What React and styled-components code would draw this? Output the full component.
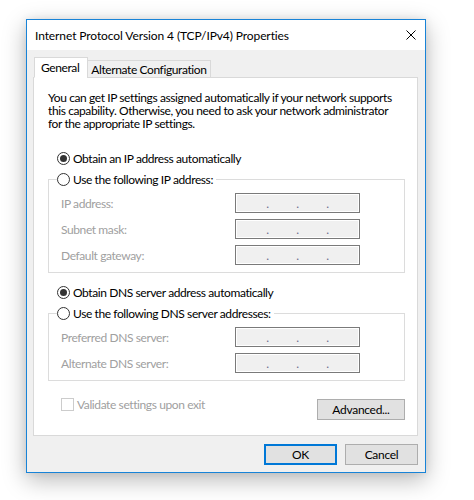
import React, { useState } from 'react'
import styled, { createGlobalStyle } from 'styled-components'

const GlobalStyle = createGlobalStyle`
    html, body {
        margin: 0;
        background: #fff;
    }
    body {
        font-family: Lato, "Liberation Sans", sans-serif;
        font-size: 12px;
        letter-spacing: -0.4px;
        color: #000;
    }
`

const Page = styled.div`
    padding: 19px 0 0 26px;
    height: 500px;
    box-sizing: border-box;
`

const Window = styled.div`
    width: 400px;
    height: 454px;
    box-sizing: border-box;
    border: 1px solid #1883d7;
    background: #f0f0f0;
    display: flex;
    flex-direction: column;
    box-shadow: 0 7px 22px rgba(0, 0, 0, 0.28), 0 0 8px rgba(0, 0, 0, 0.08);
`

const TitleBar = styled.div`
    height: 30px;
    background: #fff;
    display: flex;
    align-items: center;
    justify-content: space-between;
    padding: 0 9px 0 8px;
    font-size: 12px;
    letter-spacing: -0.1px;
`

const Body = styled.div`
    flex: 1;
    display: flex;
    flex-direction: column;
    padding: 7px 7px 7px 6px;
`

const TabStrip = styled.div`
    display: flex;
    align-items: flex-end;
    height: 21px;
    padding-left: 1px;
    margin-bottom: -1px;
    position: relative;
    z-index: 1;
`

const Tab = styled.div`
    box-sizing: border-box;
    display: flex;
    align-items: center;
    border: 1px solid #d9d9d9;
    height: ${p => (p.active ? '21px' : '18px')};
    padding: ${p => (p.active ? '0 8px 0 6px' : '0 4px 0 3px')};
    background: ${p => (p.active ? '#fff' : '#f0f0f0')};
    border-bottom-color: ${p => (p.active ? '#fff' : '#d9d9d9')};
    margin-left: ${p => (p.active ? '0' : '-1px')};
    padding-top: ${p => (p.active ? '0' : '1px')};
    cursor: default;
`

const Panel = styled.div`
    flex: 1;
    background: #fff;
    border: 1px solid #d9d9d9;
    padding: 13px 12px 0 14px;
    display: flex;
    flex-direction: column;
`

const Intro = styled.p`
    margin: 0;
    line-height: 13px;
    white-space: nowrap;
`

const RadioRow = styled.label`
    display: flex;
    align-items: center;
    gap: 3px;
    height: 15px;
    padding-left: 9px;
    margin-top: ${p => p.top || 0}px;
`

const Radio = styled.span`
    box-sizing: border-box;
    width: 13px;
    height: 13px;
    border-radius: 50%;
    border: 1px solid #333;
    background: #fff;
    display: flex;
    align-items: center;
    justify-content: center;

    &::after {
        content: "";
        width: 7px;
        height: 7px;
        border-radius: 50%;
        background: #333;
        display: ${p => (p.checked ? 'block' : 'none')};
    }
`

const Group = styled.fieldset`
    margin: 6px 0 0 0;
    padding: 6px 0 7px 8px;
    border: 1px solid #dcdcdc;
    min-width: 0;
`

const Legend = styled.legend`
    display: flex;
    align-items: center;
    gap: 3px;
    height: 15px;
    padding: 0 3px 0 0;
`

const Fields = styled.div`
    display: grid;
    grid-template-columns: 174px 125px;
    grid-auto-rows: 20px;
    row-gap: 6px;
    padding-left: 4px;
`

const FieldLabel = styled.span`
    display: flex;
    align-items: center;
    color: #a0a0a0;
`

const IpBox = styled.div`
    box-sizing: border-box;
    border: 1px solid #7a7a7a;
    box-shadow: inset 0 0 0 1px #fff;
    background: #f0f0f0;
    display: flex;
    justify-content: center;
    gap: 27px;
    line-height: 20px;
    color: #6d6d8d;
`

const Dot = styled.span`
    width: 3px;
    text-align: center;
    line-height: 19px;
`

const BottomRow = styled.div`
    display: flex;
    justify-content: space-between;
    align-items: flex-start;
    margin-top: 17px;
`

const CheckRow = styled.label`
    display: flex;
    align-items: center;
    gap: 3px;
    margin-left: 13px;
    height: 13px;
    color: #a0a0a0;
`

const CheckBox = styled.span`
    box-sizing: border-box;
    width: 13px;
    height: 13px;
    border: 1px solid #cccccc;
    background: #fff;
`

const Button = styled.button`
    box-sizing: border-box;
    width: ${p => p.width || 73}px;
    height: 21px;
    margin-top: ${p => p.top || 0}px;
    padding: 0;
    font-family: inherit;
    font-size: 12px;
    letter-spacing: -0.3px;
    color: #000;
    background: #e1e1e1;
    border: 1px solid ${p => (p.primary ? '#0078d7' : '#adadad')};
    box-shadow: ${p => (p.primary ? 'inset 0 0 0 1px #0078d7' : 'none')};
    cursor: default;
`

const ButtonRow = styled.div`
    display: flex;
    justify-content: flex-end;
    gap: 8px;
    margin-top: 8px;
`

const CloseIcon = () => (
    <svg width="10" height="10" viewBox="0 0 10 10">
        <path d="M0.5 0.5 L9.5 9.5 M9.5 0.5 L0.5 9.5" stroke="#000" strokeWidth="1" fill="none" />
    </svg>
)

const IpField = () => (
    <IpBox>
        <Dot>.</Dot>
        <Dot>.</Dot>
        <Dot>.</Dot>
    </IpBox>
)

const App = () => {
    const [tab, setTab] = useState('general')

    return (
        <Page>
            <GlobalStyle />
            <Window>
                <TitleBar>
                    <span>Internet Protocol Version 4 (TCP/IPv4) Properties</span>
                    <CloseIcon />
                </TitleBar>
                <Body>
                    <TabStrip>
                        <Tab active={tab === 'general'} onClick={() => setTab('general')}>General</Tab>
                        <Tab active={tab === 'alt'} onClick={() => setTab('alt')}>Alternate Configuration</Tab>
                    </TabStrip>
                    <Panel>
                        <Intro>
                            You can get IP settings assigned automatically if your network supports<br />
                            this capability. Otherwise, you need to ask your network administrator<br />
                            for the appropriate IP settings.
                        </Intro>

                        <RadioRow top={21}>
                            <Radio checked />
                            Obtain an IP address automatically
                        </RadioRow>
                        <Group>
                            <Legend>
                                <Radio />
                                Use the following IP address:
                            </Legend>
                            <Fields>
                                <FieldLabel>IP address:</FieldLabel>
                                <IpField />
                                <FieldLabel>Subnet mask:</FieldLabel>
                                <IpField />
                                <FieldLabel>Default gateway:</FieldLabel>
                                <IpField />
                            </Fields>
                        </Group>

                        <RadioRow top={12}>
                            <Radio checked />
                            Obtain DNS server address automatically
                        </RadioRow>
                        <Group>
                            <Legend>
                                <Radio />
                                Use the following DNS server addresses:
                            </Legend>
                            <Fields>
                                <FieldLabel>Preferred DNS server:</FieldLabel>
                                <IpField />
                                <FieldLabel>Alternate DNS server:</FieldLabel>
                                <IpField />
                            </Fields>
                        </Group>

                        <BottomRow>
                            <CheckRow>
                                <CheckBox />
                                Validate settings upon exit
                            </CheckRow>
                            <Button width={88} top={1}>Advanced...</Button>
                        </BottomRow>
                    </Panel>
                    <ButtonRow>
                        <Button primary>OK</Button>
                        <Button>Cancel</Button>
                    </ButtonRow>
                </Body>
            </Window>
        </Page>
    )
}

export default App
